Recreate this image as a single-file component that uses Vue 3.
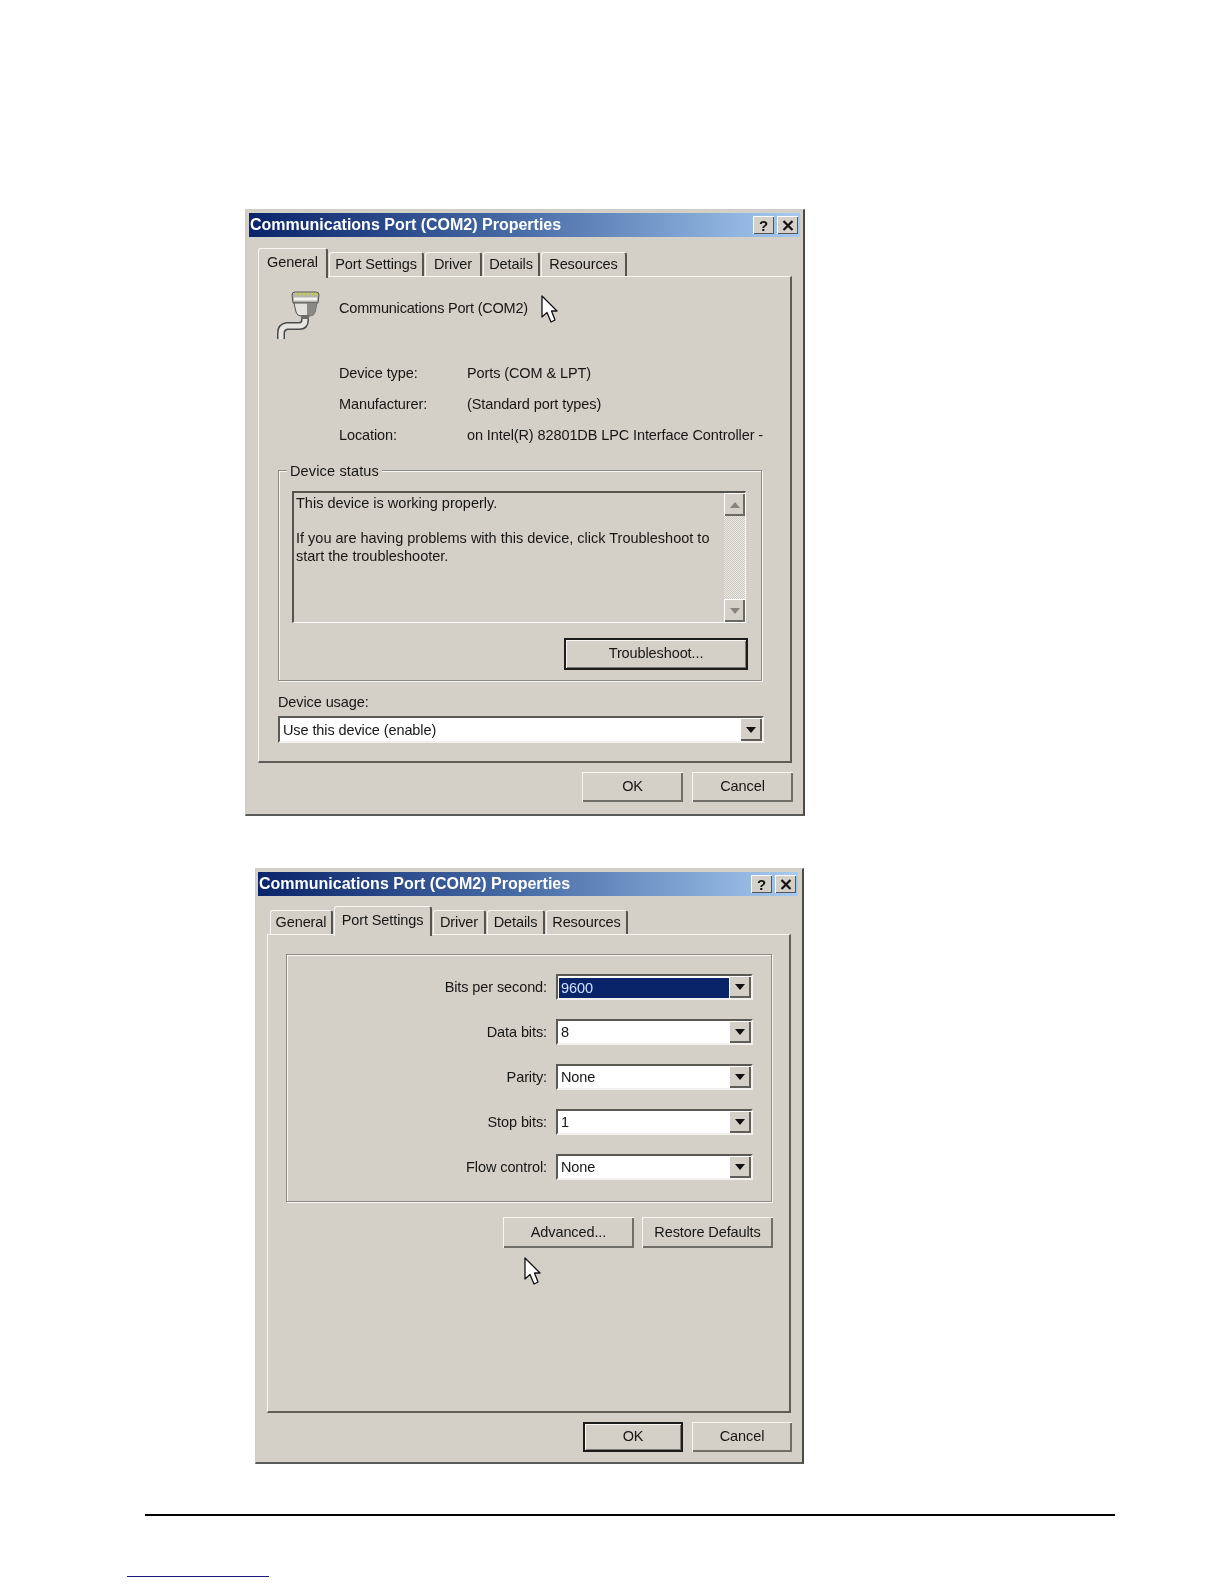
<script setup>
const tabsA = [
  { label: 'General', w: 70, active: true },
  { label: 'Port Settings', w: 95 },
  { label: 'Driver', w: 57 },
  { label: 'Details', w: 57 },
  { label: 'Resources', w: 86 }
]
const tabsB = [
  { label: 'General', w: 63 },
  { label: 'Port Settings', w: 98, active: true },
  { label: 'Driver', w: 53 },
  { label: 'Details', w: 58 },
  { label: 'Resources', w: 82 }
]
const info = [
  ['Device type:', 'Ports (COM & LPT)'],
  ['Manufacturer:', '(Standard port types)'],
  ['Location:', 'on Intel(R) 82801DB LPC Interface Controller -']
]
const settings = [
  { label: 'Bits per second:', value: '9600', selected: true },
  { label: 'Data bits:', value: '8' },
  { label: 'Parity:', value: 'None' },
  { label: 'Stop bits:', value: '1' },
  { label: 'Flow control:', value: 'None' }
]
</script>

<template>
  <div class="page">
    <section class="dlg dlg-a">
      <header class="title">
        <span class="title-text">Communications Port (COM2) Properties</span>
        <span class="tbtn help">?</span>
        <span class="tbtn">
          <svg width="12" height="11" viewBox="0 0 12 11"><path d="M1.5 1 L10.5 10 M10.5 1 L1.5 10" stroke="#111" stroke-width="2.2" fill="none"/></svg>
        </span>
      </header>
      <nav class="tabs tabs-a">
        <div v-for="t in tabsA" :key="t.label" class="tab" :class="{ active: t.active }" :style="{ width: t.w + 'px' }">{{ t.label }}</div>
      </nav>
      <div class="panel panel-a">
        <div class="head">
          <svg class="port-icon" width="44" height="48" viewBox="0 0 44 48">
            <path d="M28 24 V29 Q28 35 22 35 H10 Q4 36 4 42 V48" fill="none" stroke="#4a4a48" stroke-width="8"/>
            <path d="M28 24 V29 Q28 35 22 35 H10 Q4 36 4 42 V48" fill="none" stroke="#e6e5e0" stroke-width="5"/>
            <path d="M15 4 Q15 1 18 1 H39 Q42 1 42 4 L41 12 H16 Z" fill="#b5b4ae" stroke="#55544f" stroke-width="1"/>
            <path d="M17 12 H40 L38 21 Q37 25 33 25 H24 Q20 25 19 21 Z" fill="#e2e1dc" stroke="#55544f" stroke-width="1"/>
            <path d="M30 12 H40 L38 21 Q37 25 33 25 H30 Z" fill="#8a8984"/>
            <rect x="24" y="24" width="8" height="4" fill="#6c6b66"/>
            <path d="M18 3 H40" stroke="#c9d03a" stroke-width="2.6" stroke-dasharray="2.4 1.6"/>
            <path d="M17 8 H40" stroke="#f4f4ee" stroke-width="3"/>
          </svg>
          <span class="head-text">Communications Port (COM2)</span>
          <svg class="cursor cursor-a" width="17" height="28" viewBox="0 0 17 28">
            <path d="M1 1 V22 L6 17.5 L10 27 L14 25 L10.5 16 L16 16 Z" fill="#fff" stroke="#111" stroke-width="1.3" stroke-linejoin="round"/>
          </svg>
        </div>
        <div class="info">
          <template v-for="r in info" :key="r[0]">
            <span>{{ r[0] }}</span><span class="nowrap">{{ r[1] }}</span>
          </template>
        </div>
        <div class="group group-a">
          <span class="legend">Device status</span>
          <div class="statusbox">
            <div class="statustext">
              <p>This device is working properly.</p>
              <p class="gap">If you are having problems with this device, click Troubleshoot to</p>
              <p>start the troubleshooter.</p>
            </div>
            <div class="scroll">
              <span class="sbtn"><i class="arrow up"></i></span>
              <span class="strack"></span>
              <span class="sbtn"><i class="arrow down"></i></span>
            </div>
          </div>
          <div class="trouble-row">
            <button class="btn default trouble">Troubleshoot...</button>
          </div>
        </div>
        <div class="usage-label">Device usage:</div>
        <div class="select select-a">
          <span class="value">Use this device (enable)</span>
          <span class="dropbtn"><i class="tri"></i></span>
        </div>
      </div>
      <footer class="foot foot-a">
        <button class="btn ok-a">OK</button>
        <button class="btn ok-a">Cancel</button>
      </footer>
    </section>

    <section class="dlg dlg-b">
      <header class="title">
        <span class="title-text">Communications Port (COM2) Properties</span>
        <span class="tbtn help">?</span>
        <span class="tbtn">
          <svg width="12" height="11" viewBox="0 0 12 11"><path d="M1.5 1 L10.5 10 M10.5 1 L1.5 10" stroke="#111" stroke-width="2.2" fill="none"/></svg>
        </span>
      </header>
      <nav class="tabs tabs-b">
        <div v-for="t in tabsB" :key="t.label" class="tab" :class="{ active: t.active }" :style="{ width: t.w + 'px' }">{{ t.label }}</div>
      </nav>
      <div class="panel panel-b">
        <div class="group group-b">
          <div v-for="s in settings" :key="s.label" class="setting">
            <span class="setting-label">{{ s.label }}</span>
            <div class="select select-b">
              <span class="value" :class="{ selected: s.selected }">{{ s.value }}</span>
              <span class="dropbtn"><i class="tri"></i></span>
            </div>
          </div>
        </div>
        <div class="adv-row">
          <button class="btn adv">Advanced...</button>
          <button class="btn adv">Restore Defaults</button>
        </div>
        <svg class="cursor cursor-b" width="17" height="28" viewBox="0 0 17 28">
          <path d="M1 1 V22 L6 17.5 L10 27 L14 25 L10.5 16 L16 16 Z" fill="#fff" stroke="#111" stroke-width="1.3" stroke-linejoin="round"/>
        </svg>
      </div>
      <footer class="foot foot-b">
        <button class="btn default ok-b">OK</button>
        <button class="btn ok-b">Cancel</button>
      </footer>
    </section>

    <div class="rule"></div>
    <div class="footnote"></div>
  </div>
</template>

<style scoped>
.page {
  height: 1584px;
  padding-top: 209px;
  box-sizing: border-box;
  overflow: hidden;
  background: #fff;
  font-family: "Liberation Sans", Arial, sans-serif;
  font-size: 14.5px;
  letter-spacing: -0.1px;
  color: #161614;
}
.dlg {
  box-sizing: border-box;
  background: #d4d0c8;
  border-top: 1px solid #cfccc4;
  border-left: 1px solid #cfccc4;
  border-right: 2px solid #4a4a48;
  border-bottom: 2px solid #5a5a56;
  filter: blur(0.4px);
}
.dlg-a { width: 560px; height: 607px; margin-left: 245px; padding: 3px 3px 0 3px; }
.dlg-b { width: 549px; height: 596px; margin-left: 255px; margin-top: 52px; padding: 3px 4px 0 2px; }
.title {
  height: 24px;
  display: flex;
  align-items: center;
  padding-right: 2px;
  gap: 3px;
  background: linear-gradient(90deg, #0a246a 0%, #4a6ea8 50%, #a6caf0 100%);
}
.title-text {
  flex: 1;
  color: #fff;
  font-weight: 700;
  font-size: 16px;
  letter-spacing: 0;
  padding-left: 1px;
  white-space: nowrap;
}
.tbtn {
  width: 21px;
  height: 18px;
  display: flex;
  align-items: center;
  justify-content: center;
  background: #d4d0c8;
  box-shadow: inset 1px 1px #fff, inset -1px -1px #555;
  font-weight: 700;
  font-size: 15px;
  color: #111;
}
.tabs { display: flex; align-items: flex-end; gap: 1px; }
.tabs-a { height: 39px; margin-left: 9px; }
.tabs-b { height: 38px; margin-left: 12px; }
.tab {
  box-sizing: border-box;
  height: 24px;
  line-height: 23px;
  text-align: center;
  white-space: nowrap;
  background: #d4d0c8;
  border-top: 1px solid #f7f6f2;
  border-left: 1px solid #f7f6f2;
  border-right: 2px solid #55544f;
  border-radius: 3px 3px 0 0;
}
.tab.active {
  position: relative;
  z-index: 1;
  height: 30px;
  line-height: 26px;
  margin-bottom: -2px;
}
.panel {
  box-sizing: border-box;
  border-top: 1px solid #f7f6f2;
  border-left: 1px solid #f7f6f2;
  border-right: 2px solid #5e5d58;
  border-bottom: 2px solid #5e5d58;
}
.panel-a { height: 487px; margin: 0 8px 0 9px; padding: 16px 26px 0 19px; }
.panel-b { height: 479px; margin: 0 7px 0 9px; padding: 19px 17px 0 18px; }
.head { display: flex; align-items: flex-start; height: 44px; }
.port-icon { display: block; margin-top: -2px; margin-left: -1px; }
.head-text { line-height: 30px; margin-left: 18px; white-space: nowrap; letter-spacing: -0.2px; }
.cursor { display: block; flex: none; }
.cursor-a { margin-left: 13px; margin-top: 2px; }
.cursor-b { margin-left: 238px; margin-top: 9px; }
.info {
  display: grid;
  grid-template-columns: 128px 1fr;
  grid-auto-rows: 31px;
  align-items: center;
  margin-top: 20px;
  padding-left: 61px;
}
.nowrap { white-space: nowrap; }
.group {
  position: relative;
  box-sizing: border-box;
  border: 1px solid #8b8a84;
  box-shadow: inset 1px 1px #f7f6f2, 1px 1px #f7f6f2;
}
.group-a { width: 484px; height: 211px; margin-top: 20px; padding: 20px 13px 0 13px; }
.group-b { width: 486px; height: 248px; padding: 19px 18px 0 0; display: flex; flex-direction: column; gap: 19px; }
.legend {
  position: absolute;
  left: 8px;
  top: -10px;
  line-height: 20px;
  padding: 0 3px;
  letter-spacing: 0.15px;
  background: #d4d0c8;
}
.statusbox {
  box-sizing: border-box;
  width: 454px;
  height: 132px;
  display: flex;
  border-top: 2px solid #55544f;
  border-left: 2px solid #55544f;
  border-bottom: 1px solid #fff;
  border-right: 1px solid #fff;
}
.statustext { flex: 1; padding: 2px 0 0 2px; line-height: 17.5px; min-width: 0; white-space: nowrap; letter-spacing: 0; }
.statustext p { margin: 0; }
.statustext .gap { margin-top: 17.5px; }
.scroll { width: 21px; display: flex; flex-direction: column; }
.sbtn {
  flex: none;
  height: 23px;
  display: flex;
  align-items: center;
  justify-content: center;
  background: #d4d0c8;
  box-shadow: inset 1px 1px #fff, inset -2px -2px #6a6a64;
}
.strack {
  flex: 1;
  background: repeating-conic-gradient(#eceae5 0 25%, #cac7bf 0 50%) 0 0 / 2px 2px;
}
.arrow { width: 0; height: 0; border-left: 5px solid transparent; border-right: 5px solid transparent; }
.arrow.up { border-bottom: 6px solid #85847e; }
.arrow.down { border-top: 6px solid #85847e; }
.trouble-row { display: flex; justify-content: flex-end; margin-top: 15px; }
.btn {
  box-sizing: border-box;
  padding: 0 0 2px;
  font: inherit;
  letter-spacing: inherit;
  color: inherit;
  background: #d4d0c8;
  border: 0;
  border-radius: 0;
  box-shadow: inset 1px 1px #f7f6f2, inset -2px -2px #6f6e68;
}
.btn.default { box-shadow: inset 0 0 0 2px #1c1c1a, inset 3px 3px #f7f6f2, inset -3px -3px #7a7973; }
.trouble { width: 184px; height: 32px; }
.usage-label { margin-top: 11px; line-height: 20px; }
.select {
  box-sizing: border-box;
  display: flex;
  align-items: center;
  background: #fff;
  border-top: 2px solid #5a5954;
  border-left: 2px solid #5a5954;
  border-bottom: 2px solid #f2f1ed;
  border-right: 2px solid #f2f1ed;
}
.select-a { width: 486px; height: 27px; margin-top: 4px; }
.select-b { width: 197px; height: 26px; }
.value { flex: 1; padding-left: 3px; line-height: 22px; white-space: nowrap; }
.select-b .value { padding-top: 1px; line-height: 21px; }
.select-b .value.selected { background: #0a246a; color: #cfe0ff; margin: 1px 0 0 1px; line-height: 20px; padding: 0 0 0 2px; }
.dropbtn {
  width: 22px;
  height: 100%;
  flex: none;
  display: flex;
  align-items: center;
  justify-content: center;
  background: #d4d0c8;
  box-shadow: inset 1px 1px #fff, inset -2px -2px #5f5e59;
}
.tri { width: 0; height: 0; border-left: 5px solid transparent; border-right: 5px solid transparent; border-top: 6px solid #111; }
.setting { display: flex; align-items: center; justify-content: flex-end; gap: 9px; }
.setting-label { white-space: nowrap; margin-top: -1px; }
.adv-row { display: flex; justify-content: flex-end; gap: 8px; margin-top: 15px; width: 487px; }
.adv { width: 131px; height: 31px; }
.foot { display: flex; justify-content: flex-end; gap: 9px; }
.foot-a { margin: 9px 7px 0 0; }
.foot-b { margin: 9px 6px 0 0; }
.ok-a { width: 101px; height: 30px; }
.ok-b { width: 100px; height: 30px; }
.rule { height: 2px; width: 970px; margin: 50px 0 0 145px; background: #000; }
.footnote { height: 1px; width: 142px; margin: 60px 0 0 127px; background: #1a1a80; }
</style>
